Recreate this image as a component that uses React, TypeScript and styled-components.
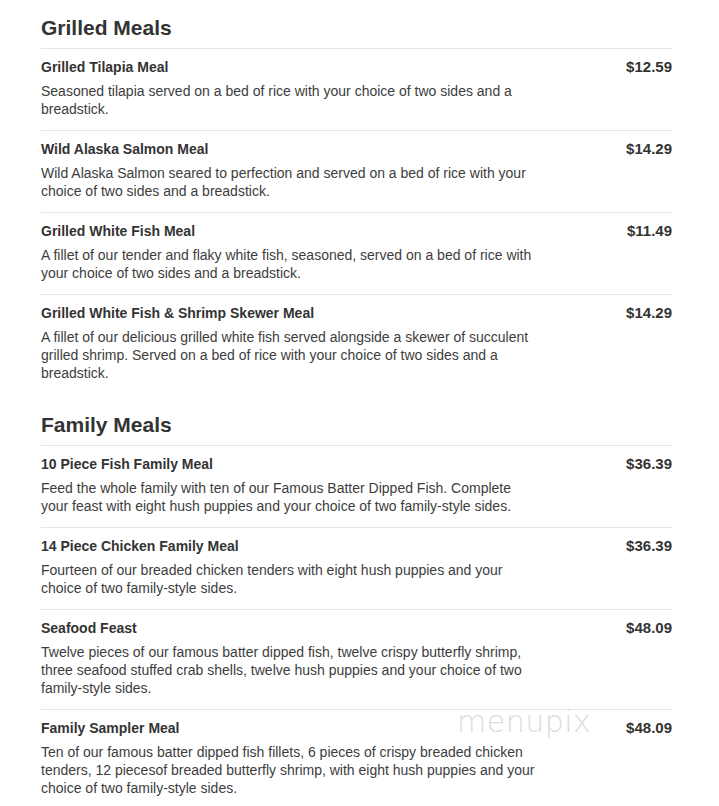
import React from "react";
import styled, { createGlobalStyle } from "styled-components";

const GlobalStyle = createGlobalStyle`
  body {
    margin: 0;
    background: #ffffff;
    font-family: "Liberation Sans", Arial, sans-serif;
    color: #333333;
  }
`;

const Page = styled.div`
  position: relative;
  width: 631px;
  margin-left: 41px;
`;

const Section = styled.section`
  padding: 16px 0 3px;
`;

const SectionTitle = styled.h2`
  margin: 0 0 8px;
  font-size: 21px;
  line-height: 24px;
  font-weight: bold;
  color: #333333;
`;

const Row = styled.div`
  display: flex;
  justify-content: space-between;
  align-items: flex-start;
  border-top: 1px solid #e6e6e6;
  padding: 9px 0 12px;
`;

const Info = styled.div`
  display: flex;
  flex-direction: column;
  gap: 6px;
`;

const ItemName = styled.div`
  font-size: 14px;
  line-height: 18px;
  font-weight: bold;
  color: #333333;
`;

const Description = styled.p`
  margin: 0;
  width: 498px;
  font-size: 14px;
  line-height: 18px;
  color: #3d3d3d;
`;

const Price = styled.div`
  font-size: 15px;
  line-height: 18px;
  font-weight: bold;
  color: #333333;
`;

const Watermark = styled.div`
  position: absolute;
  left: 416px;
  top: 704px;
  font-family: "DejaVu Sans", sans-serif;
  font-weight: 200;
  font-size: 30px;
  letter-spacing: 0.5px;
  color: #dcdcdc;
  pointer-events: none;
`;

type MenuItem = { name: string; desc: string; price: string };

const grilled: MenuItem[] = [
  {
    name: "Grilled Tilapia Meal",
    desc: "Seasoned tilapia served on a bed of rice with your choice of two sides and a breadstick.",
    price: "$12.59",
  },
  {
    name: "Wild Alaska Salmon Meal",
    desc: "Wild Alaska Salmon seared to perfection and served on a bed of rice with your choice of two sides and a breadstick.",
    price: "$14.29",
  },
  {
    name: "Grilled White Fish Meal",
    desc: "A fillet of our tender and flaky white fish, seasoned, served on a bed of rice with your choice of two sides and a breadstick.",
    price: "$11.49",
  },
  {
    name: "Grilled White Fish & Shrimp Skewer Meal",
    desc: "A fillet of our delicious grilled white fish served alongside a skewer of succulent grilled shrimp. Served on a bed of rice with your choice of two sides and a breadstick.",
    price: "$14.29",
  },
];

const family: MenuItem[] = [
  {
    name: "10 Piece Fish Family Meal",
    desc: "Feed the whole family with ten of our Famous Batter Dipped Fish. Complete your feast with eight hush puppies and your choice of two family-style sides.",
    price: "$36.39",
  },
  {
    name: "14 Piece Chicken Family Meal",
    desc: "Fourteen of our breaded chicken tenders with eight hush puppies and your choice of two family-style sides.",
    price: "$36.39",
  },
  {
    name: "Seafood Feast",
    desc: "Twelve pieces of our famous batter dipped fish, twelve crispy butterfly shrimp, three seafood stuffed crab shells, twelve hush puppies and your choice of two family-style sides.",
    price: "$48.09",
  },
  {
    name: "Family Sampler Meal",
    desc: "Ten of our famous batter dipped fish fillets, 6 pieces of crispy breaded chicken tenders, 12 piecesof breaded butterfly shrimp, with eight hush puppies and your choice of two family-style sides.",
    price: "$48.09",
  },
];

const MenuSection = ({ title, items }: { title: string; items: MenuItem[] }) => (
  <Section>
    <SectionTitle>{title}</SectionTitle>
    {items.map((item) => (
      <Row key={item.name}>
        <Info>
          <ItemName>{item.name}</ItemName>
          <Description>{item.desc}</Description>
        </Info>
        <Price>{item.price}</Price>
      </Row>
    ))}
  </Section>
);

export default function App() {
  return (
    <>
      <GlobalStyle />
      <Page>
        <MenuSection title="Grilled Meals" items={grilled} />
        <MenuSection title="Family Meals" items={family} />
        <Watermark>menupix</Watermark>
      </Page>
    </>
  );
}
